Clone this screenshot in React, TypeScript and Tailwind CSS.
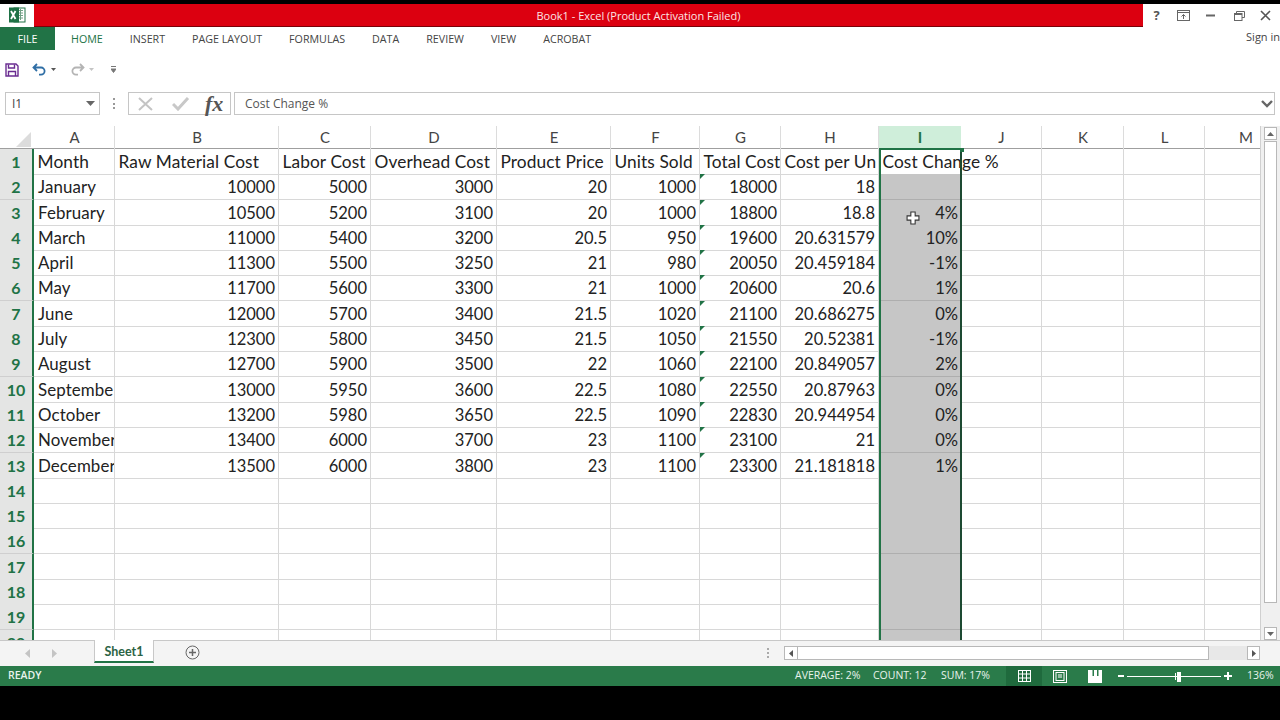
import React from "react";

const COLS = ["A", "B", "C", "D", "E", "F", "G", "H", "I", "J", "K", "L", "M"];
const GRID = "grid grid-cols-[34px_81px_164px_92px_126px_114px_89px_81px_98px_82px_81px_82px_81px_82px]";

const DATA: (string | number)[][] = [
  ["January", 10000, 5000, 3000, 20, 1000, 18000, 18, ""],
  ["February", 10500, 5200, 3100, 20, 1000, 18800, 18.8, "4%"],
  ["March", 11000, 5400, 3200, 20.5, 950, 19600, "20.631579", "10%"],
  ["April", 11300, 5500, 3250, 21, 980, 20050, "20.459184", "-1%"],
  ["May", 11700, 5600, 3300, 21, 1000, 20600, 20.6, "1%"],
  ["June", 12000, 5700, 3400, 21.5, 1020, 21100, "20.686275", "0%"],
  ["July", 12300, 5800, 3450, 21.5, 1050, 21550, "20.52381", "-1%"],
  ["August", 12700, 5900, 3500, 22, 1060, 22100, "20.849057", "2%"],
  ["Septembe", 13000, 5950, 3600, 22.5, 1080, 22550, "20.87963", "0%"],
  ["October", 13200, 5980, 3650, 22.5, 1090, 22830, "20.944954", "0%"],
  ["November", 13400, 6000, 3700, 23, 1100, 23100, "21", "0%"],
  ["December", 13500, 6000, 3800, 23, 1100, 23300, "21.181818", "1%"],
];
const HEAD = ["Month", "Raw Material Cost", "Labor Cost", "Overhead Cost", "Product Price", "Units Sold", "Total Cost", "Cost per Un", "Cost Change %"];
const TABS = ["HOME", "INSERT", "PAGE LAYOUT", "FORMULAS", "DATA", "REVIEW", "VIEW", "ACROBAT"];

const cellBase = "h-full border-r border-b border-[#d8d8d8] overflow-hidden whitespace-nowrap leading-[26px] text-[#222]";

function RowHead({ n }: { n: number }) {
  return (
    <div className="h-full bg-[#e4e5e4] border-r-2 border-r-[#217346] border-b border-b-[#cfcfcf] flex items-center justify-center pt-[1px] text-[16px] font-bold text-[#217346]">
      {n}
    </div>
  );
}

function Empty({ sel }: { sel?: boolean }) {
  return <div className={sel ? "h-full bg-[#c6c6c6] border-b border-b-[#aeaeae]" : "h-full border-r border-b border-[#d8d8d8]"} />;
}

function DataRow({ n, row }: { n: number; row: (string | number)[] }) {
  return (
    <div className={`${GRID} h-[25.3px] shrink-0`}>
      <RowHead n={n} />
      {row.map((v, i) => {
        if (i === 8) {
          return (
            <div key={i} className="h-full bg-[#c6c6c6] border-b border-b-[#aeaeae] overflow-hidden text-right pr-[3px] leading-[26px] text-[16.5px] text-[#222]">
              {v}
            </div>
          );
        }
        return (
          <div key={i} className={`${cellBase} relative ${i === 0 ? "pl-[4px] text-left text-[16.9px] tracking-[0.1px]" : "pr-[3px] text-right text-[16.5px]"}`}>
            {i === 6 && <span className="absolute left-0 top-0 w-0 h-0 border-t-[5px] border-t-[#217346] border-r-[5px] border-r-transparent" />}
            {v}
          </div>
        );
      })}
      <Empty /><Empty /><Empty /><div className="h-full border-b border-[#d8d8d8]" />
    </div>
  );
}

function ExcelLogo() {
  return (
    <svg width="18" height="18" viewBox="0 0 18 18">
      <rect x="6" y="2" width="11" height="14" fill="#fff" stroke="#217346" />
      <path d="M10 4.5h5M10 7h5M10 9.5h5M10 12h5M12.5 3v11" stroke="#6f9f84" />
      <rect x="1" y="1.5" width="10" height="15" fill="#1e7145" />
      <path d="M3 5l4.5 8M7.5 5L3 13" stroke="#fff" strokeWidth="1.8" />
    </svg>
  );
}

export default function App() {
  return (
    <div className="w-[1280px] h-[720px] bg-black flex flex-col overflow-hidden font-['Open_Sans',sans-serif]">
      <div className="h-[4px] shrink-0 bg-black" />

      {/* title bar */}
      <div className="h-[23px] shrink-0 flex bg-white">
        <div className="w-[34px] flex items-center justify-center pb-[1px]"><ExcelLogo /></div>
        <div className="flex-1 bg-[#dc0010] border-b border-b-[#7a0008] flex items-center justify-center pl-[100px] pt-[2px] text-[11px] text-[#fbe6e6]">
          Book1 - Excel (Product Activation Failed)
        </div>
        <div className="w-[137px] relative flex items-center text-[#555]">
          <span className="w-[27px] text-center text-[13px] font-bold leading-none">?</span>
          <svg width="13" height="11" viewBox="0 0 13 11" className="ml-[7px]" fill="none" stroke="#666">
            <rect x="0.5" y="0.5" width="12" height="10" />
            <path d="M0.5 2.5h12M6.5 9V4.5M4.5 6.5l2-2 2 2" />
          </svg>
          <svg width="9" height="3" viewBox="0 0 9 3" className="ml-[16px]"><rect width="9" height="2" y="0.5" fill="#666" /></svg>
          <svg width="11" height="10" viewBox="0 0 11 10" className="ml-[19px]" fill="none" stroke="#666">
            <rect x="0.5" y="2.5" width="7.5" height="7" fill="#fff" />
            <path d="M2.5 2.5v-2h8v6H8" />
            <path d="M0.5 3.5h7.5" />
          </svg>
          <svg width="11" height="11" viewBox="0 0 11 11" className="ml-[15px]" stroke="#555" strokeWidth="1.6"><path d="M1 1l9 9M10 1l-9 9" /></svg>
        </div>
      </div>

      {/* ribbon tabs */}
      <div className="h-[23px] shrink-0 bg-white flex items-center text-[10.7px] text-[#444]">
        <div className="w-[55px] h-full bg-[#217346] text-white flex items-center justify-center pt-[1px]">FILE</div>
        <div className="flex items-center gap-[27px] pl-[16px] pt-[2px]">
          {TABS.map((t) => <span key={t} className={t === "HOME" ? "text-[#217346]" : ""}>{t}</span>)}
        </div>
        <span className="ml-auto pb-[3px] text-[11px]">Sign in</span>
      </div>

      {/* quick access */}
      <div className="h-[40px] shrink-0 bg-white flex items-center pl-[5px] pb-[1px]">
        <svg width="14" height="14" viewBox="0 0 14 14" fill="none" stroke="#6a2c91" strokeWidth="1.4">
          <path d="M1 1h10l2 2v10H1z" />
          <path d="M3.5 1.5v3.5h6v-3.5M3.5 13V8.5h7V13" />
        </svg>
        <svg width="15" height="13" viewBox="0 0 15 13" className="ml-[13px]" fill="none" stroke="#2f6ea5" strokeWidth="1.8">
          <path d="M5 1L1.5 4.5 5 8M2 4.5h7a3.6 3.6 0 0 1 0 7.2H7" />
        </svg>
        <svg width="5" height="3" viewBox="0 0 5 3" className="ml-[4px]"><path d="M0 0h5L2.5 3z" fill="#555" /></svg>
        <svg width="15" height="13" viewBox="0 0 15 13" className="ml-[14px]" fill="none" stroke="#b4b4b4" strokeWidth="1.8">
          <path d="M10 1l3.5 3.5L10 8M13 4.5H6a3.6 3.6 0 0 0 0 7.2h2" />
        </svg>
        <svg width="5" height="3" viewBox="0 0 5 3" className="ml-[4px]"><path d="M0 0h5L2.5 3z" fill="#c4c4c4" /></svg>
        <svg width="5" height="7" viewBox="0 0 5 7" className="ml-[17px]"><path d="M0 0.5h5M0 3h5L2.5 6.5 0 3z" stroke="#777" strokeWidth="1" fill="#777" /></svg>
      </div>

      {/* formula bar */}
      <div className="h-[36px] shrink-0 bg-white flex items-start pt-[2px] pl-[5px] pr-[5px]">
        <div className="w-[95px] h-[23px] border border-[#c6c6c6] flex items-center pl-[6px] text-[12px] text-[#444]">
          <span className="flex-1">I1</span>
          <svg width="9" height="5" viewBox="0 0 9 5" className="mr-[4px]"><path d="M0 0h9L4.5 5z" fill="#666" /></svg>
        </div>
        <div className="w-[2px] h-[11px] ml-[13px] mt-[6px] border-l-2 border-dotted border-l-[#999]" />
        <div className="w-[103px] h-[23px] ml-[13px] border border-[#c6c6c6] flex items-center">
          <svg width="15" height="14" viewBox="0 0 15 14" className="ml-[9px]" stroke="#c4c4c4" strokeWidth="2"><path d="M1 1l13 12M14 1L1 13" /></svg>
          <svg width="18" height="14" viewBox="0 0 18 14" className="ml-[19px]" fill="none" stroke="#c8c8c8" strokeWidth="3"><path d="M1 7l5 5L16 1" /></svg>
          <span className="ml-[15px] font-['Liberation_Serif',serif] italic font-bold text-[22px] leading-none text-[#555]">fx</span>
        </div>
        <div className="flex-1 h-[23px] ml-[3px] border border-[#c6c6c6] flex items-center pl-[10px] text-[12px] text-[#555]">
          <span className="flex-1">Cost Change %</span>
          <svg width="12" height="8" viewBox="0 0 12 8" className="mr-[1px]" fill="none" stroke="#666" strokeWidth="2.4"><path d="M1 1l5 5 5-5" /></svg>
        </div>
      </div>

      {/* sheet */}
      <div className="h-[514px] shrink-0 flex bg-white">
        <div className="w-[1260px] shrink-0 relative overflow-hidden font-['Lato',sans-serif]">
          <div className={`${GRID} h-[23px] border-b border-b-[#9f9f9f] text-[15px] text-[#444]`}>
            <div className="h-full relative">
              <span className="absolute right-[3px] bottom-[2px] w-0 h-0 border-b-[15px] border-b-[#dcdcdc] border-l-[15px] border-l-transparent" />
            </div>
            {COLS.map((c) => (
              <div key={c} className={c === "I"
                ? "h-full bg-[#cfeeda] text-[#217346] font-bold flex items-center justify-center"
                : "h-full border-r border-r-[#dcdcdc] flex items-center justify-center pl-[1px]"}>{c}</div>
            ))}
          </div>

          {/* row 1 */}
          <div className={`${GRID} h-[25.3px]`}>
            <RowHead n={1} />
            {HEAD.map((h, i) => (
              <div key={h} className={i === 8
                ? "h-full pl-[3.5px] whitespace-nowrap leading-[26px] text-[17.3px] tracking-[0.1px] text-[#222] relative z-10"
                : `${cellBase} pl-[3.5px] text-[17.3px] tracking-[0.1px]`}>{h}</div>
            ))}
            <Empty /><Empty /><Empty /><div className="h-full border-b border-[#d8d8d8]" />
          </div>

          {DATA.map((r, i) => <DataRow key={i} n={i + 2} row={r} />)}

          {[14, 15, 16, 17, 18, 19, 20].map((n) => (
            <div key={n} className={`${GRID} h-[25.3px]`}>
              <RowHead n={n} />
              {Array.from({ length: 8 }).map((_, i) => <Empty key={i} />)}
              <Empty sel />
              <Empty /><Empty /><Empty /><div className="h-full border-b border-[#d8d8d8]" />
            </div>
          ))}

          {/* selection outline */}
          <div className="absolute left-[879px] top-[22px] w-[83px] h-[492px] border-2 border-b-0 border-[#217346] border-r-[#1d4a32] pointer-events-none z-20" />
          <div className="absolute left-[960px] top-[22px] w-[4px] h-[4px] bg-[#217346] z-20" />

          {/* cursor */}
          <svg width="14" height="14" viewBox="0 0 13 13" className="absolute left-[906px] top-[85px] z-30">
            <path d="M4.5 1h4v3.5H12v4H8.5V12h-4V8.5H1v-4h3.5z" fill="#fff" stroke="#333" strokeWidth="1" />
          </svg>
        </div>

        {/* vertical scrollbar */}
        <div className="flex-1 bg-[#f0f0f0] border-l border-l-[#d0d0d0] flex flex-col items-center pt-[1px]">
          <div className="w-[13px] h-[13px] bg-white border border-[#b8b8b8] flex items-center justify-center">
            <svg width="7" height="4" viewBox="0 0 7 4"><path d="M3.5 0L7 4H0z" fill="#666" /></svg>
          </div>
          <div className="w-[13px] h-[462px] mt-[1px] bg-white border border-[#b8b8b8]" />
          <div className="w-[13px] h-[13px] mt-auto bg-white border border-[#b8b8b8] flex items-center justify-center">
            <svg width="7" height="4" viewBox="0 0 7 4"><path d="M0 0h7L3.5 4z" fill="#666" /></svg>
          </div>
        </div>
      </div>

      {/* sheet tabs */}
      <div className="h-[26px] shrink-0 bg-[#f4f4f4] border-t border-t-[#c8c8c8] flex items-start text-[#555]">
        <svg width="5" height="9" viewBox="0 0 5 9" className="ml-[25px] mt-[8px]"><path d="M5 0v9L0 4.5z" fill="#c4c4c4" /></svg>
        <svg width="5" height="9" viewBox="0 0 5 9" className="ml-[22px] mt-[8px]"><path d="M0 0v9l5-4.5z" fill="#c4c4c4" /></svg>
        <div className="ml-[37px] -mt-[1px] w-[60px] h-[23px] bg-white border-x border-x-[#c8c8c8] border-b-2 border-b-[#217346] flex items-center justify-center pt-[3px] text-[12.5px] font-bold text-[#2b6344] font-['Lato',sans-serif]">
          Sheet1
        </div>
        <svg width="15" height="15" viewBox="0 0 15 15" className="ml-[31px] mt-[4px]" fill="none" stroke="#666">
          <circle cx="7.5" cy="7.5" r="6.5" />
          <path d="M7.5 4v7M4 7.5h7" strokeWidth="1.5" />
        </svg>
        <div className="w-[2px] h-[10px] ml-[567px] mt-[7px] border-l-2 border-dotted border-l-[#aaa]" />
        <div className="ml-[15px] mt-[5px] flex items-stretch h-[14px]">
          <div className="w-[14px] bg-white border border-[#b8b8b8] flex items-center justify-center">
            <svg width="4" height="7" viewBox="0 0 4 7"><path d="M4 0v7L0 3.5z" fill="#555" /></svg>
          </div>
          <div className="w-[411px] bg-white border-y border-r border-[#b8b8b8]" />
          <div className="w-[38px] bg-[#e8e8e8]" />
          <div className="w-[13px] bg-white border border-[#b8b8b8] flex items-center justify-center">
            <svg width="4" height="7" viewBox="0 0 4 7"><path d="M0 0v7l4-3.5z" fill="#555" /></svg>
          </div>
        </div>
      </div>

      {/* status bar */}
      <div className="h-[20px] shrink-0 bg-[#2a7b4a] flex items-center text-[10.5px] text-[#e8f3ec]">
        <span className="ml-[8px] font-semibold w-[36px]">READY</span>
        <span className="ml-[751px] w-[66px] whitespace-nowrap">AVERAGE: 2%</span>
        <span className="ml-[12px] w-[56px] whitespace-nowrap">COUNT: 12</span>
        <span className="ml-[12px] w-[50px] whitespace-nowrap">SUM: 17%</span>
        <div className="ml-[15px] w-[36px] h-full bg-[#1f6a3d] flex items-center justify-center">
          <svg width="13" height="12" viewBox="0 0 13 12" fill="none" stroke="#fff"><rect x="0.5" y="0.5" width="12" height="11" /><path d="M4.5 0v12M8.5 0v12M0 4h13M0 8h13" /></svg>
        </div>
        <svg width="14" height="13" viewBox="0 0 14 13" className="ml-[11px]" fill="none" stroke="#fff"><rect x="0.5" y="0.5" width="13" height="12" /><rect x="3" y="2.5" width="8" height="8" /><path d="M5 5h4M5 7h4" /></svg>
        <svg width="14" height="13" viewBox="0 0 14 13" className="ml-[21px]"><rect width="14" height="13" fill="#fff" /><path d="M4.5 0h1.5v6h-1.5zM9 0h1.5v6H9z" fill="#2a7b4a" /></svg>
        <svg width="6" height="2" viewBox="0 0 6 2" className="ml-[16px]"><rect width="6" height="2" fill="#fff" /></svg>
        <div className="ml-[3px] w-[94px] h-[1px] bg-white relative">
          <span className="absolute left-[48px] -top-[3px] w-[1px] h-[7px] bg-white" />
          <span className="absolute left-[50px] -top-[4px] w-[4px] h-[10px] bg-white" />
        </div>
        <svg width="8" height="8" viewBox="0 0 8 8" className="ml-[3px]"><path d="M0 3h8v2H0zM3 0h2v8H3z" fill="#fff" /></svg>
        <span className="ml-[15px] whitespace-nowrap">136%</span>
      </div>

      <div className="flex-1 bg-black" />
    </div>
  );
}
